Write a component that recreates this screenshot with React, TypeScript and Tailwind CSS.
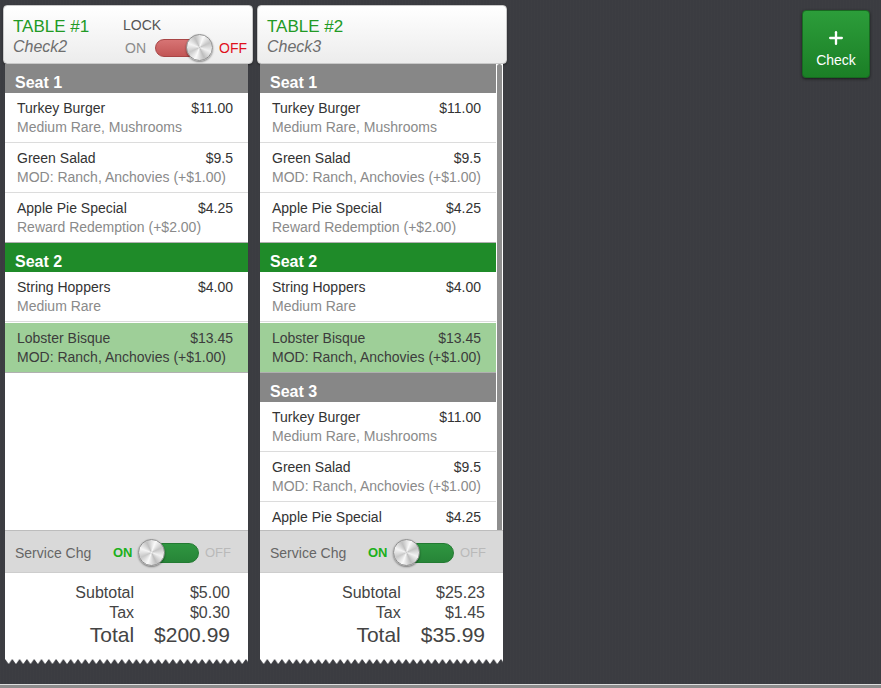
import React from 'react';
import { Plus } from 'lucide-react';

type Item = { name: string; price: string; note: string; selected?: boolean };
type Seat = { label: string; active?: boolean; items: Item[] };
type Table = {
  title: string;
  check: string;
  lock?: boolean;
  scroll?: boolean;
  seats: Seat[];
  subtotal: string;
  tax: string;
  total: string;
};

const seatOne: Item[] = [
  { name: 'Turkey Burger', price: '$11.00', note: 'Medium Rare, Mushrooms' },
  { name: 'Green Salad', price: '$9.5', note: 'MOD: Ranch, Anchovies (+$1.00)' },
  { name: 'Apple Pie Special', price: '$4.25', note: 'Reward Redemption (+$2.00)' },
];

const seatTwo: Item[] = [
  { name: 'String Hoppers', price: '$4.00', note: 'Medium Rare' },
  { name: 'Lobster Bisque', price: '$13.45', note: 'MOD: Ranch, Anchovies (+$1.00)', selected: true },
];

// last row of table 2 is scrolled under the service bar, its note is out of view
const seatThree: Item[] = [seatOne[0], seatOne[1], { name: 'Apple Pie Special', price: '$4.25', note: '' }];

const tables: Table[] = [
  {
    title: 'TABLE #1',
    check: 'Check2',
    lock: true,
    seats: [
      { label: 'Seat 1', items: seatOne },
      { label: 'Seat 2', active: true, items: seatTwo },
    ],
    subtotal: '$5.00',
    tax: '$0.30',
    total: '$200.99',
  },
  {
    title: 'TABLE #2',
    check: 'Check3',
    scroll: true,
    seats: [
      { label: 'Seat 1', items: seatOne },
      { label: 'Seat 2', active: true, items: seatTwo },
      { label: 'Seat 3', items: seatThree },
    ],
    subtotal: '$25.23',
    tax: '$1.45',
    total: '$35.99',
  },
];

function Knob() {
  return (
    <div className="absolute top-0 size-[27px] rounded-full border border-[#8f8f8f] bg-[conic-gradient(from_20deg,#fafafa,#c4c4c4,#f2f2f2,#bdbdbd,#fafafa,#c8c8c8,#f5f5f5,#c0c0c0,#fafafa)] shadow-[0_1px_2px_rgba(0,0,0,0.45)]" />
  );
}

function LockSwitch() {
  return (
    <div className="relative h-[28px] w-[58px]">
      <div className="absolute left-0 right-[6px] top-[5px] h-[18px] rounded-full border border-[#a84545] bg-[linear-gradient(#d77474,#c25656)]" />
      <div className="absolute right-0 top-0 size-[27px]">
        <Knob />
      </div>
    </div>
  );
}

function ServiceSwitch() {
  return (
    <div className="relative h-[28px] w-[61px]">
      <div className="absolute left-[3px] right-0 top-[4px] h-[20px] rounded-full border border-[#237a32] bg-[linear-gradient(#2f9641,#278538)]" />
      <div className="absolute left-0 top-0 size-[27px]">
        <Knob />
      </div>
    </div>
  );
}

function Zigzag({ id }: { id: string }) {
  return (
    <svg width="243" height="6" className="block">
      <defs>
        <pattern id={id} width="7.3" height="6" patternUnits="userSpaceOnUse">
          <polygon points="0,0 7.3,0 3.65,5" fill="#ffffff" />
        </pattern>
      </defs>
      <rect width="243" height="6" fill={`url(#${id})`} />
    </svg>
  );
}

function ItemRow({ item, last }: { item: Item; last: boolean }) {
  return (
    <div
      className={`h-[50px] border-b pl-[12px] pr-[15px] pt-[6px] text-[14px] leading-[19px] ${
        last ? 'border-[#b0b0b0]' : 'border-[#dcdcdc]'
      } ${item.selected ? 'mt-[1px] bg-[#9ecf98] text-[#3c3c3c]' : 'bg-white text-[#333]'}`}
    >
      <div className="flex justify-between">
        <span>{item.name}</span>
        <span>{item.price}</span>
      </div>
      {item.note && (
        <div className={`whitespace-nowrap ${item.selected ? 'text-[#3c3c3c]' : 'text-[#8a8a8a]'}`}>{item.note}</div>
      )}
    </div>
  );
}

function Receipt({ table, idx }: { table: Table; idx: number }) {
  return (
    <div className="flex w-[250px] flex-col">
      {/* header card */}
      <div className="flex h-[59px] rounded-[4px] border border-[#c9c9c9] bg-[linear-gradient(#ffffff,#ececec)] shadow-[0_1px_2px_rgba(0,0,0,0.4)]">
        <div className="w-[119px] pl-[9px] pt-[10px]">
          <div className="text-[17px] leading-[22px] text-[#229a25]">{table.title}</div>
          <div className="text-[16px] italic leading-[18px] text-[#6e6e6e]">{table.check}</div>
        </div>
        {table.lock && (
          <div className="pt-[10px]">
            <div className="text-[14px] leading-[18px] text-[#555]">LOCK</div>
            <div className="flex h-[28px] items-center">
              <span className="ml-[2px] w-[30px] text-[14px] text-[#8a8a8a]">ON</span>
              <LockSwitch />
              <span className="ml-[6px] text-[14px] text-[#e0101c]">OFF</span>
            </div>
          </div>
        )}
      </div>

      <div className={`w-[243px] bg-white ${idx === 0 ? 'ml-[2px]' : 'ml-[3px]'}`}>
        {/* seat list */}
        <div className="flex h-[466px]">
          <div className={`overflow-hidden ${table.scroll ? 'w-[236px]' : 'w-[243px]'}`}>
            {table.seats.map((seat) => (
              <div key={seat.label}>
                <div
                  className={`h-[29px] pl-[10px] pt-[9px] text-[16px] font-bold leading-[20px] text-white ${
                    seat.active ? 'bg-[#1f8b29]' : 'bg-[#878787]'
                  }`}
                >
                  {seat.label}
                </div>
                {seat.items.map((item, i) => (
                  <ItemRow key={item.name} item={item} last={i === seat.items.length - 1} />
                ))}
              </div>
            ))}
          </div>
          {table.scroll && (
            <div className="w-[7px] pl-[1px]">
              <div className="h-full w-[5px] rounded-t-[3px] bg-[#8e8e8e]" />
            </div>
          )}
        </div>

        {/* service charge */}
        <div className="flex h-[43px] items-center border-y border-t-[#bdbdbd] border-b-[#cdcdcd] bg-[#d9d9d9] pl-[10px] pt-[3px]">
          <span className="w-[98px] text-[14px] text-[#666]">Service Chg</span>
          <span className="w-[25px] text-[13px] font-bold text-[#1cb01c]">ON</span>
          <ServiceSwitch />
          <span className="ml-[6px] text-[13px] text-[#b9b9b9]">OFF</span>
        </div>

        {/* totals */}
        <div className="grid h-[86px] grid-cols-[auto_auto] content-start justify-end gap-x-[20px] pr-[18px] pt-[10px] text-right text-[#444]">
          <span className="text-[16px] leading-[20px]">Subtotal</span>
          <span className="text-[16px] leading-[20px]">{table.subtotal}</span>
          <span className="text-[16px] leading-[20px]">Tax</span>
          <span className="text-[16px] leading-[20px]">{table.tax}</span>
          <span className="text-[21px] leading-[24px]">Total</span>
          <span className="text-[21px] leading-[24px]">{table.total}</span>
        </div>
      </div>
      <div className={idx === 0 ? 'ml-[2px]' : 'ml-[3px]'}>
        <Zigzag id={`zig-${idx}`} />
      </div>
    </div>
  );
}

export default function App() {
  return (
    <div className="flex h-[688px] w-[881px] flex-col overflow-hidden font-['Liberation_Sans',Arial,sans-serif]">
      <div className="flex flex-1 items-start bg-[#3b3c41] bg-[repeating-linear-gradient(90deg,rgba(255,255,255,0.008)_0px,rgba(255,255,255,0.008)_1px,transparent_1px,transparent_3px)] pl-[3px] pt-[5px]">
        <div className="flex gap-[4px]">
          {tables.map((t, i) => (
            <Receipt key={t.title} table={t} idx={i} />
          ))}
        </div>
        <button className="ml-auto mr-[11px] mt-[5px] flex h-[68px] w-[68px] flex-col items-center rounded-[4px] border border-[#176a20] bg-[linear-gradient(#2c9d3a,#1b7f26)] pt-[17px] text-white shadow-[0_1px_3px_rgba(0,0,0,0.6)]">
          <Plus size={20} strokeWidth={2.8} />
          <span className="mt-[4px] text-[14px] leading-[16px]">Check</span>
        </button>
      </div>
      <div className="h-[4px] border-t border-[#dedede] bg-[#8d8d8d]" />
    </div>
  );
}
